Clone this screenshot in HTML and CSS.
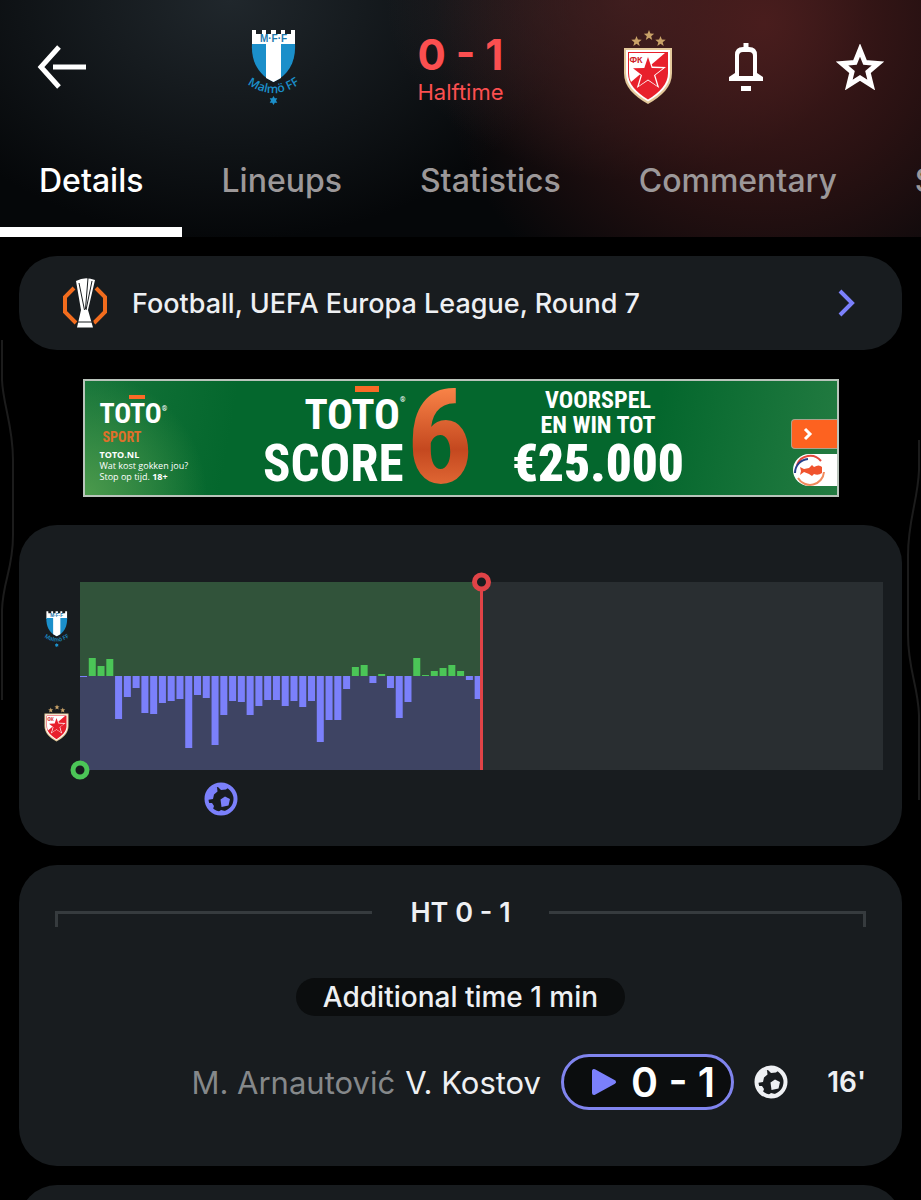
FILE: index.html
```html
<!DOCTYPE html>
<html lang="en">
<head>
    <meta charset="UTF-8">
    <meta name="viewport" content="width=device-width, initial-scale=1.0">
    <title>Malmö FF - Crvena zvezda</title>
    <link rel="stylesheet" href="styles.css">
</head>
<body>
    <!-- shared icons -->
    <svg class="sprite" aria-hidden="true">
        <symbol id="malmo" viewBox="0 0 52 76">
            <path d="M5 1h4v4h6V1h4v4h5V1h5v4h5V1h4v4h6V1h4v16H5z" fill="#fff"/>
            <path d="M5 15h43c1 17-6 31-21.500 38C11 46 4 32 5 15z" fill="#1b8fca"/>
            <path d="M19 15h15v34l-7.500 4-7.500-4z" fill="#fff"/>
            <text x="26.500" y="13" class="crest-letters" fill="#1b78ad">M·F·F</text>
            <path id="malmo-arc" d="M2 56q24 16 49 0" fill="none"/>
            <text class="crest-name" fill="#1b8fca"><textPath href="#malmo-arc" startOffset="50%">Malmö FF</textPath></text>
            <path d="M26.500 67l1.300 2.200h2.500L29 71.500l1.300 2.200h-2.500L26.500 76l-1.300-2.300h-2.500l1.300-2.200-1.300-2.300h2.500z" fill="#1b8fca"/>
        </symbol>
        <symbol id="zvezda" viewBox="0 0 50 76">
            <g fill="#c9a268">
                <path id="gold-star" d="M26 1l1.400 3.600 3.800.2-3 2.400 1 3.700L26 8.800l-3.200 2.100 1-3.700-3-2.400 3.800-.2z"/>
                <use href="#gold-star" x="-12.500" y="6"/>
                <use href="#gold-star" x="11.500" y="6"/>
            </g>
            <path d="M1 19h48v25c0 14-10 23-24 31C11 67 1 58 1 44z" fill="#e3c99b"/>
            <path d="M3 21h44v23c0 12-9 21-22 28.500C12 65 3 56 3 44z" fill="#fff"/>
            <path d="M5 23h40v21c0 11-8 19-20 26.500C13 63 5 55 5 44z" fill="#e8202c"/>
            <path d="M6 24h36L8 53Q6 49 6 44z" fill="#fff"/>
            <text x="13" y="34" class="crest-fk" fill="#d01f2a">ФК</text>
            <path d="M25 25l4.500 12.500 13.500.4-10.700 8.300 3.900 12.900L25 51.500l-11.200 7.600 3.900-12.900L7 37.900l13.500-.4z" fill="#fff"/>
            <path d="M25 28l3.700 11 11.300.3-9 7 3.200 10.700L25 50.500 15.800 57 19 46.300l-9-7 11.300-.3z" fill="#e8202c"/>
        </symbol>
        <symbol id="ball" viewBox="-17 -17 34 34">
            <circle r="14.500" fill="none" stroke="currentColor" stroke-width="4"/>
            <path d="M-12-10l8-2 .5 4.500-3.500 3L-8 0l-6 1zM-14 4l5 0 2 3-1 3-3 1zM-5-14l5 5 5-.5L9-13zM-4 14l4-3 4 1 2 3zM-.5.500L4-2.500 9 0 7.500 6.500.500 8z" fill="currentColor"/>
        </symbol>
    </svg>

    <svg class="edge edge-left" viewBox="0 0 16 360" aria-hidden="true">
        <path d="M2 0v40C3 65 13 85 13 120v75C13 230 3 240 2 270v90"/>
    </svg>
    <svg class="edge edge-right" viewBox="0 0 16 360" aria-hidden="true">
        <path d="M14 0v30C13 60 3 80 3 115v80C3 230 13 245 14 275v85"/>
    </svg>

    <header>
        <div class="topbar">
            <div class="topbar-left">
                <button class="icon-btn" aria-label="Back">
                    <svg width="50" height="44" viewBox="0 0 50 44" fill="none" stroke="#fff" stroke-width="5">
                        <path d="M22 2L4 22l18 20M16 22h33"/>
                    </svg>
                </button>
            </div>
            <div class="match">
                <svg class="crest"><use href="#malmo"/></svg>
                <div class="score">
                    <strong>0 - 1</strong>
                    <span>Halftime</span>
                </div>
                <svg class="crest"><use href="#zvezda"/></svg>
            </div>
            <div class="topbar-right">
                <button class="icon-btn" aria-label="Notifications">
                    <svg width="36" height="48" viewBox="0 0 36 48" fill="#fff">
                        <path d="M15.500 0h5v5h-5zM13 43h10v5H13z"/>
                        <path d="M1 38v-4l6-4V12q0-8 8-8h6q8 0 8 8v18l6 4v4zM11 33h14V13q0-4-4-4h-6q-4 0-4 4z" fill-rule="evenodd"/>
                    </svg>
                </button>
                <button class="icon-btn" aria-label="Favourite">
                    <svg width="48" height="46" viewBox="0 0 48 46" fill="none" stroke="#fff" stroke-width="5">
                        <path d="M24 6l5 12.500 13 1-10 8.500 3.200 13L24 34l-11.200 7L16 28 6 19.500l13-1z"/>
                    </svg>
                </button>
            </div>
        </div>
        <nav class="tabs">
            <a href="#" class="active">Details</a>
            <a href="#">Lineups</a>
            <a href="#">Statistics</a>
            <a href="#">Commentary</a>
            <a href="#">Standings</a>
        </nav>
    </header>

    <main>
        <a href="#" class="card league">
            <svg width="46" height="52" viewBox="0 0 46 52">
                <path d="M12 11L3 20v15l11 11M34 11l9 9v15L32 46" fill="none" stroke="#f26c1d" stroke-width="4"/>
                <path d="M14 4q9-5 19-1l-7 30 5 17.500H15L19 33z" fill="#fff"/>
                <path d="M17 6l5.500 27M26 1l-2.500 31M30 4l-6 29M15 45h17" fill="none" stroke="#181c1f" stroke-width="1"/>
            </svg>
            <span>Football, UEFA Europa League, Round 7</span>
            <svg width="18" height="28" viewBox="0 0 18 28" fill="none" stroke="#7b80fb" stroke-width="4">
                <path d="M2 2l12 12L2 26"/>
            </svg>
        </a>

        <a href="#" class="banner">
            <div class="banner-brand">
                <div class="toto toto-small">TOTO<sup>®</sup></div>
                <div class="sport">SPORT</div>
                <p><b>TOTO.NL</b><br>Wat kost gokken jou?<br>Stop op tijd. <b>18+</b></p>
            </div>
            <div class="banner-game">
                <div class="toto">TOTO<sup>®</sup></div>
                <div class="score-word">SCORE</div>
            </div>
            <div class="six">6</div>
            <div class="banner-prize">
                <div>VOORSPEL</div>
                <div>EN WIN TOT</div>
                <strong>€25.000</strong>
            </div>
            <div class="banner-side">
                <div class="go">
                    <svg width="10" height="14" viewBox="0 0 10 14" fill="none" stroke="#fff" stroke-width="3"><path d="M2 2l5 5-5 5"/></svg>
                </div>
                <div class="partner">
                    <svg width="34" height="32" viewBox="0 0 34 32" fill="none">
                        <path d="M4 11A14 14 0 0 1 28 7" stroke="#e5473b" stroke-width="2"/>
                        <path d="M2 19A14 14 0 0 1 15 5" stroke="#27408b" stroke-width="2"/>
                        <path d="M5 24a14 14 0 0 0 26-6" stroke="#f08a5c" stroke-width="2"/>
                        <path d="M7 13l4 2 5-1 3-3 2 2q5-3 8 0v6q-4 3-8 1l-2 2-3-2-5-2-4 3 1-4z" fill="#f0532d"/>
                    </svg>
                </div>
            </div>
        </a>

        <section class="card momentum">
            <div class="sides">
                <svg><use href="#malmo"/></svg>
                <svg><use href="#zvezda"/></svg>
            </div>
            <svg class="plot" viewBox="0 0 803 188">
                <rect width="803" height="188" fill="#292e31"/>
                <rect width="401" height="94" fill="#31533a"/>
                <rect y="94" width="401" height="94" fill="#3e4463"/>
                <g id="bars"></g>
                <path d="M401.500 0v188" stroke="#e04347" stroke-width="3"/>
                <circle cx="401.500" cy="0" r="7" fill="#181c1f" stroke="#e04347" stroke-width="5"/>
                <circle cx="0" cy="188" r="7" fill="#181c1f" stroke="#4bc557" stroke-width="5"/>
                <use href="#ball" x="124" y="200" width="34" height="34" color="#7b80fb"/>
            </svg>
        </section>

        <section class="card incidents">
            <div class="period"><span>HT 0 - 1</span></div>
            <div class="added">Additional time 1 min</div>
            <div class="goal">
                <span class="assist">M. Arnautović</span>
                <span class="scorer">V. Kostov</span>
                <button class="replay">
                    <svg width="26" height="30" viewBox="0 0 26 30" fill="#7b80fb" stroke="#7b80fb" stroke-width="4" stroke-linejoin="round"><path d="M3 4v22l20-11z"/></svg>
                    0 - 1
                </button>
                <svg class="goal-ball"><use href="#ball"/></svg>
                <span class="minute">16'</span>
            </div>
        </section>

        <section class="card next"></section>
    </main>

    <script>
        // attack momentum per minute, above zero is the home side
        const momentum = [
            -1, 18, 10, 17, -43, -21, -12, -37, -38, -27, -25, -23, -72, -19, -22,
            -69, -39, -25, -26, -39, -30, -24, -24, -30, -25, -31, -25, -66, -44, -44,
            -13, 9, 11, -7, 2, -12, -42, -26, 18, 1, 5, 8, 11, 5, -4, -23
        ];
        const bars = document.getElementById('bars');

        momentum.forEach((value, i) => {
            const bar = document.createElementNS('http://www.w3.org/2000/svg', 'rect');
            const x = i * 8.77;
            bar.setAttribute('x', x);
            bar.setAttribute('y', value > 0 ? 94 - value : 94);
            bar.setAttribute('width', Math.min(7, 401 - x));
            bar.setAttribute('height', Math.abs(value));
            bar.setAttribute('fill', value > 0 ? '#4bc557' : '#7b80fb');
            bars.appendChild(bar);
        });
    </script>
</body>
</html>
```
FILE: styles.css
```css
*,
*::before,
*::after {
    box-sizing: border-box;
}

body {
    position: relative;
    margin: 0;
    height: 100vh;
    overflow: hidden;
    display: flex;
    flex-direction: column;
    background: #000;
    color: #eef0f3;
    font-family: Inter, Roboto, sans-serif;
}

a {
    color: inherit;
    text-decoration: none;
}

button {
    padding: 0;
    border: none;
    background: none;
    color: inherit;
    font-family: inherit;
    cursor: pointer;
}

svg {
    display: block;
}

.sprite {
    position: absolute;
    width: 0;
    height: 0;
}

.crest-letters {
    font: bold 10px "Liberation Sans", sans-serif;
    text-anchor: middle;
}

.crest-name {
    font: 600 12px "Open Sans", sans-serif;
    text-anchor: middle;
}

.crest-fk {
    font: bold 9px "Liberation Sans", sans-serif;
    text-anchor: middle;
}

.edge {
    position: absolute;
    width: 16px;
    height: 360px;
    fill: none;
    stroke: #1c1c1c;
    stroke-width: 2;
}

.edge-left {
    left: 0;
    top: 340px;
}

.edge-right {
    right: 0;
    top: 440px;
}

header {
    flex: none;
    background:
        radial-gradient(ellipse 330px 330px at 83% 10%, rgba(78, 30, 30, 0.9), rgba(64, 24, 24, 0.6) 50%, transparent),
        radial-gradient(ellipse 240px 180px at 68% 0, rgba(78, 50, 52, 0.7), transparent),
        radial-gradient(ellipse 340px 240px at 25% 0, #20272c, transparent),
        #050709;
}

.topbar {
    display: grid;
    grid-template-columns: 1fr 428px 1fr;
    align-items: center;
    height: 134px;
}

.topbar-left,
.topbar-right {
    display: flex;
    justify-content: space-between;
    align-items: center;
    padding: 0 37px;
}

.topbar-right {
    padding-left: 53px;
}

.match {
    display: flex;
    justify-content: space-between;
    align-items: center;
}

.crest {
    width: 52px;
    height: 76px;
}

.score {
    padding-top: 4px;
    text-align: center;
    color: #fb4f50;
}

.score strong {
    display: block;
    font-size: 42px;
    line-height: 46px;
}

.score span {
    display: block;
    font-size: 22px;
    line-height: 28px;
}

.tabs {
    display: flex;
    overflow: hidden;
    height: 103px;
}

.tabs a {
    flex: none;
    padding: 26px 39px 0;
    font-size: 32px;
    line-height: 42px;
    font-weight: 500;
    color: #9c9899;
}

.tabs a.active {
    color: #fff;
    border-bottom: 10px solid #fff;
}

main {
    flex: 1;
    min-height: 0;
    padding: 19px 19px 0;
    overflow: hidden;
}

.card {
    margin-bottom: 19px;
    border-radius: 38px;
    background: #181c1f;
}

.league {
    display: flex;
    align-items: center;
    gap: 24px;
    height: 94px;
    padding: 0 46px 0 43px;
    margin-bottom: 29px;
    font-size: 27px;
    font-weight: 500;
}

.league span {
    flex: 1;
}

.banner {
    display: flex;
    align-items: center;
    max-width: 756px;
    height: 118px;
    margin: 0 auto 28px;
    padding-left: 15px;
    border: 2px solid #b9c4bb;
    background: radial-gradient(circle at 0 100%, #4c9a4c, transparent 16%), linear-gradient(100deg, #16743a, #04672d 20%, #04672d 75%, #237b41);
    color: #fff;
    font-family: "Liberation Sans Narrow", "Roboto Condensed", Roboto, sans-serif;
    font-weight: bold;
}

.banner-brand {
    width: 160px;
}

.banner-brand p {
    margin: 4px 0 0;
    font: 500 9px/11px "Open Sans", sans-serif;
}

.toto {
    padding-top: 4px;
    font-size: 43px;
    line-height: 48px;
    background: linear-gradient(#fb6a26, #fb6a26) 78% 0 / 24px 6px no-repeat;
}

.toto-small {
    width: 66px;
    font-size: 28px;
    line-height: 30px;
    background-position: 58% 0;
    background-size: 16px 4px;
}

.toto sup {
    font-size: 7px;
    line-height: 20px;
    vertical-align: top;
}

.sport {
    padding-left: 3px;
    color: #e0702a;
    font-size: 14px;
    line-height: 16px;
}

.banner-game {
    width: 146px;
    text-align: right;
}

.score-word {
    padding-right: 2px;
    font-size: 51px;
    line-height: 52px;
}

.six {
    width: 68px;
    text-align: center;
    font-size: 132px;
    line-height: 114px;
    color: transparent;
    background: linear-gradient(#ff8a4c, #c4481f 60%, #e8703a);
    background-clip: text;
}

.banner-prize {
    flex: 1;
    padding: 2px 68px 0 0;
    text-align: center;
    font-size: 24px;
    line-height: 25px;
}

.banner-prize strong {
    display: block;
    font-size: 51px;
    line-height: 52px;
}

.banner-side {
    width: 46px;
    padding-top: 28px;
}

.go {
    display: flex;
    align-items: center;
    height: 30px;
    padding-left: 11px;
    border: 1px solid #a9a38d;
    border-right: none;
    border-radius: 4px 0 0 4px;
    background: #fd6220;
}

.partner {
    margin: 5px 0 0 2px;
    border-radius: 16px 0 0 16px;
    background: #fff;
}

.momentum {
    display: grid;
    grid-template-columns: 25px 1fr;
    gap: 11px;
    padding: 57px 19px 76px 25px;
}

.sides {
    display: flex;
    flex-direction: column;
    justify-content: space-around;
}

.sides svg {
    width: 25px;
    height: 38px;
}

.plot {
    width: 100%;
    overflow: visible;
}

.incidents {
    padding: 28px 36px 56px;
}

.period {
    display: flex;
    align-items: center;
    justify-content: space-between;
    gap: 38px;
    height: 38px;
    font-size: 27px;
    font-weight: 600;
}

.period::before,
.period::after {
    content: "";
    flex: 1;
    height: 16px;
    margin-top: 14px;
    border-top: 3px solid #363b3e;
    border-left: 3px solid #363b3e;
}

.period::after {
    border-left: none;
    border-right: 3px solid #363b3e;
}

.added {
    width: fit-content;
    margin: 47px auto 38px;
    padding: 0 27px;
    border-radius: 19px;
    background: #0b0d0e;
    font-size: 28px;
    line-height: 38px;
    font-weight: 500;
}

.goal {
    display: flex;
    align-items: center;
    justify-content: flex-end;
    font-size: 31px;
}

.assist {
    margin-right: 10px;
    color: #85888a;
}

.replay {
    display: flex;
    align-items: center;
    gap: 14px;
    height: 56px;
    margin: 0 20px;
    padding: 0 16px 0 27px;
    border: 3px solid #8084ee;
    border-radius: 28px;
    background: #0b0d0e;
    color: #fff;
    font-size: 41px;
    font-weight: 600;
}

.goal-ball {
    width: 34px;
    height: 34px;
}

.minute {
    margin-left: 39px;
    font-size: 28px;
    font-weight: 600;
}

.next {
    height: 300px;
}
```
